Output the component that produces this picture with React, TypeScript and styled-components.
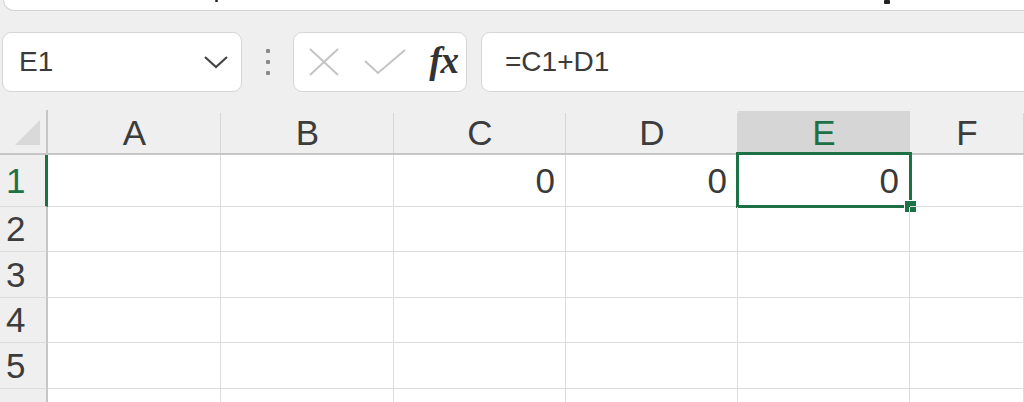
import React from "react";
import styled, { createGlobalStyle, css } from "styled-components";

const GlobalStyle = createGlobalStyle`
  html, body {
    margin: 0;
    padding: 0;
    background: #efefef;
    overflow: hidden;
  }
  body {
    font-family: "Liberation Sans", Arial, sans-serif;
    color: #333;
  }
`;

const GREEN = "#1e7145";
const LINE = "#dcdcdc";
const HEAD_LINE = "#c6c6c6";

const Page = styled.div`
  width: 1024px;
  height: 402px;
  overflow: hidden;
  background: #efefef;
  display: flex;
  flex-direction: column;
`;

const Ribbon = styled.div`
  position: relative;
  flex-shrink: 0;
  height: 10px;
  margin-left: 3px;
  margin-right: -20px;
  background: #fff;
  border: 1px solid #d4d4d4;
  border-top: none;
  border-bottom-left-radius: 12px;
`;

const Mark = styled.span<{ $x: number; $w: number; $h: number }>`
  position: absolute;
  top: 0;
  left: ${(p) => p.$x}px;
  width: ${(p) => p.$w}px;
  height: ${(p) => p.$h}px;
  background: #222;
  border-radius: 1px;
`;

const FormulaRow = styled.div`
  flex-shrink: 0;
  margin-top: 21px;
  height: 60px;
  display: flex;
  align-items: stretch;
  padding-left: 2px;
`;

const Box = styled.div`
  background: #fff;
  border: 1px solid #d6d6d6;
  border-radius: 9px;
  box-sizing: border-box;
  display: flex;
  align-items: center;
`;

const NameBox = styled(Box)`
  width: 240px;
  padding: 0 12px 0 16px;
  justify-content: space-between;
  font-size: 28px;
  color: #3a3a3a;
`;

const Grip = styled.div`
  width: 51px;
  display: flex;
  flex-direction: column;
  align-items: center;
  justify-content: center;
  gap: 7px;
`;

const Dot = styled.span`
  width: 4px;
  height: 4px;
  border-radius: 1px;
  background: #8a8a8a;
`;

const ButtonGroup = styled(Box)`
  width: 174px;
  padding: 0 8px 0 14px;
  justify-content: space-between;
`;

const Fx = styled.span`
  font-family: "Liberation Serif", "Times New Roman", serif;
  font-style: italic;
  font-weight: bold;
  font-size: 37px;
  color: #333;
  letter-spacing: -1px;
  line-height: 1;
  margin-top: -4px;
`;

const FormulaBox = styled(Box)`
  flex: 1;
  margin-left: 14px;
  margin-right: -20px;
  padding-left: 23px;
  font-size: 28px;
  color: #3a3a3a;
`;

const Grid = styled.div`
  margin-top: 18px;
  display: grid;
  grid-template-columns: 48px 173px 173px 172px 172px 172px 1fr;
  grid-template-rows: 45px 52px 45px 46px 45px 46px 40px;
  flex: 1;
  min-height: 0;
  overflow: hidden;
  background: #fff;
  font-size: 35px;
`;

const Corner = styled.div`
  background: #efefef;
  border-right: 2px solid ${HEAD_LINE};
  border-bottom: 2px solid ${HEAD_LINE};
  box-sizing: border-box;
  display: flex;
  align-items: flex-end;
  justify-content: flex-end;
  padding: 0 6px 8px 0;
`;

const CornerTri = styled.span`
  width: 25px;
  height: 25px;
  background: #d9d9d9;
  clip-path: polygon(100% 0, 100% 100%, 0 100%);
`;

const ColHead = styled.div<{ $active?: boolean }>`
  box-sizing: border-box;
  background: #efefef;
  border-bottom: 2px solid ${HEAD_LINE};
  display: flex;
  align-items: center;
  justify-content: center;
  color: #3c3c3c;
  position: relative;
  padding-top: 2px;
  &::after {
    content: "";
    position: absolute;
    right: 0;
    top: 3px;
    bottom: 0;
    width: 1px;
    background: #d6d6d6;
  }
  ${(p) =>
    p.$active &&
    css`
      color: ${GREEN};
      background: linear-gradient(#efefef 0, #efefef 1px, #d6d6d6 1px);
    `}
`;

const RowHead = styled.div<{ $active?: boolean }>`
  box-sizing: border-box;
  background: #efefef;
  border-right: 2px solid ${HEAD_LINE};
  border-bottom: 1px solid ${LINE};
  display: flex;
  align-items: center;
  padding-left: 6px;
  color: #3c3c3c;
  ${(p) =>
    p.$active &&
    css`
      color: ${GREEN};
      border-right: 3px solid ${GREEN};
    `}
`;

const Cell = styled.div`
  box-sizing: border-box;
  border-right: 1px solid ${LINE};
  border-bottom: 1px solid ${LINE};
  display: flex;
  align-items: center;
  justify-content: flex-end;
  padding-right: 10px;
  color: #3a3a3a;
  position: relative;
`;

const Selection = styled.div`
  position: absolute;
  left: -2px;
  top: -3px;
  right: -3px;
  bottom: -2px;
  border: 3px solid ${GREEN};
  pointer-events: none;
`;

const Handle = styled.span`
  position: absolute;
  right: -7px;
  bottom: -7px;
  width: 11px;
  height: 11px;
  background: ${GREEN};
  border-top: 1px solid #fff;
  border-left: 1px solid #fff;
`;

const cols = ["A", "B", "C", "D", "E", "F"];
const rows = [1, 2, 3, 4, 5];
const data: Record<string, string> = { C1: "0", D1: "0", E1: "0" };
const activeCol = "E";
const activeRow = 1;

export default function App() {
  return (
    <Page>
      <GlobalStyle />
      <Ribbon>
        <Mark $x={211} $w={3} $h={2} />
        <Mark $x={880} $w={6} $h={4} />
      </Ribbon>
      <FormulaRow>
        <NameBox>
          <span>E1</span>
          <svg width="26" height="16" viewBox="0 0 26 16">
            <path d="M2 3 L13 13 L24 3" fill="none" stroke="#444" strokeWidth="2.2" />
          </svg>
        </NameBox>
        <Grip>
          <Dot />
          <Dot />
          <Dot />
        </Grip>
        <ButtonGroup>
          <svg width="32" height="30" viewBox="0 0 32 30">
            <path d="M2 2 L30 28 M30 2 L2 28" stroke="#c4c4c4" strokeWidth="2" fill="none" />
          </svg>
          <svg width="42" height="26" viewBox="0 0 42 26">
            <path d="M1 12 L14 24 L41 1" stroke="#c4c4c4" strokeWidth="2" fill="none" />
          </svg>
          <Fx>fx</Fx>
        </ButtonGroup>
        <FormulaBox>=C1+D1</FormulaBox>
      </FormulaRow>
      <Grid>
        <Corner>
          <CornerTri />
        </Corner>
        {cols.map((c) => (
          <ColHead key={c} $active={c === activeCol}>
            {c}
          </ColHead>
        ))}
        {rows.map((r) => (
          <React.Fragment key={r}>
            <RowHead $active={r === activeRow}>{r}</RowHead>
            {cols.map((c) => {
              const id = `${c}${r}`;
              const active = c === activeCol && r === activeRow;
              return (
                <Cell key={id}>
                  {data[id] ?? ""}
                  {active && (
                    <Selection>
                      <Handle />
                    </Selection>
                  )}
                </Cell>
              );
            })}
          </React.Fragment>
        ))}
        <RowHead />
        {cols.map((c) => (
          <Cell key={`${c}-tail`} />
        ))}
      </Grid>
    </Page>
  );
}
